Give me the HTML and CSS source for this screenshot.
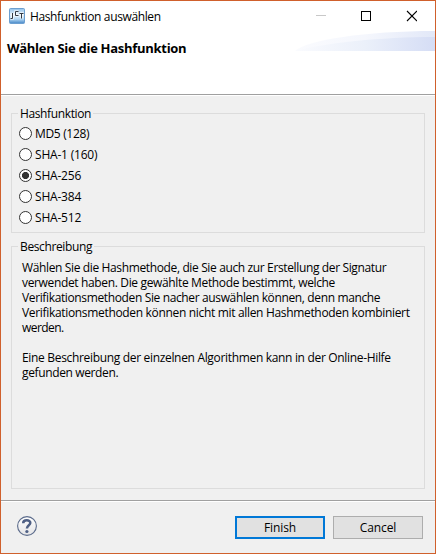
FILE: index.html
```
<!DOCTYPE html>
<html lang="de">
<head>
<meta charset="utf-8">
<title>Hashfunktion auswählen</title>
<link rel="stylesheet" href="styles.css">
</head>
<body>
<div class="window">
  <div class="titlebar">
    <svg class="app-icon" width="16" height="16" viewBox="0 0 16 16">
      <defs><linearGradient id="app" x1="0" y1="0" x2="0" y2="1"><stop offset="0" stop-color="#8fc0ea"/><stop offset=".4" stop-color="#e4f1fb"/><stop offset=".7" stop-color="#b4d8f4"/><stop offset="1" stop-color="#4385c6"/></linearGradient></defs>
      <rect x=".5" y=".5" width="15" height="15" rx="1" fill="url(#app)" stroke="#6c9fd0"/>
      <path d="M3.500 5v5.500h-2M9.500 3.500h-3v4h3M10.500 5.500h4M12.500 5.500v5" fill="none" stroke="#fff" stroke-opacity=".7" stroke-width="2.600"/>
      <path d="M3.500 5v5.500h-2M9.500 3.500h-3v4h3M10.500 5.500h4M12.500 5.500v5" fill="none" stroke="#333a44"/>
    </svg>
    <span class="title">Hashfunktion auswählen</span>
    <svg class="controls" width="103" height="12" viewBox="0 0 103 12">
      <path d="M2 5.500h10" stroke="#c8c8c8"/>
      <rect x="47.500" y="1.500" width="9" height="9" fill="none" stroke="#000"/>
      <path d="M93 1l10 10M103 1l-10 10" stroke="#000" stroke-width="1.100"/>
    </svg>
  </div>
  <header class="banner">
    <h1>Wählen Sie die Hashfunktion</h1>
    <svg class="swoosh" width="140" height="20" viewBox="0 0 140 20">
      <defs><linearGradient id="sw"><stop offset="0" stop-color="#fafbfe"/><stop offset=".5" stop-color="#ebf0fa"/><stop offset="1" stop-color="#d5ddf5"/></linearGradient>
      <linearGradient id="sw2"><stop offset="0" stop-color="#fafbfe"/><stop offset=".5" stop-color="#f5f7fd"/><stop offset="1" stop-color="#e2e8f8"/></linearGradient></defs>
      <path d="M0 20C12 9 70 0 140 0V20Z" fill="url(#sw2)"/>
      <path d="M0 20C30 12 85 6 140 6V20Z" fill="url(#sw)"/>
    </svg>
  </header>
  <main>
    <section class="group hash">
      <h2>Hashfunktion</h2>
      <div class="option md5"><i class="radio"></i><span>MD5 (128)</span></div>
      <div class="option"><i class="radio"></i><span>SHA-1 (160)</span></div>
      <div class="option"><i class="radio checked"></i><span>SHA-256</span></div>
      <div class="option"><i class="radio"></i><span>SHA-384</span></div>
      <div class="option"><i class="radio"></i><span>SHA-512</span></div>
    </section>
    <section class="group description">
      <h2>Beschreibung</h2>
      <p>
        <span class="line tight">Wählen Sie die Hashmethode, die Sie auch zur Erstellung der Signatur</span>
        <span class="line">verwendet haben. Die gewählte Methode bestimmt, welche</span>
        <span class="line tight">Verifikationsmethoden Sie nacher auswählen können, denn manche</span>
        <span class="line loose">Verifikationsmethoden können nicht mit allen Hashmethoden kombiniert</span>
        <span class="line short">werden.</span>
      </p>
      <p>
        <span class="line loose">Eine Beschreibung der einzelnen Algorithmen kann in der Online-Hilfe</span>
        <span class="line tight">gefunden werden.</span>
      </p>
    </section>
  </main>
  <footer>
    <svg class="help" width="20" height="20" viewBox="0 0 20 20">
      <defs><linearGradient id="hg" x2="0" y2="1"><stop offset="0" stop-color="#fff"/><stop offset="1" stop-color="#e4e4e6"/></linearGradient></defs>
      <circle cx="10" cy="10" r="9.400" fill="url(#hg)" stroke="#5b6b8b" stroke-width="1.100"/>
      <path d="M6.200 7.200C6.200 3.200 13.500 3.400 13.300 7C13.200 9.300 9.900 9.200 9.900 12.600" fill="none" stroke="#4f6085" stroke-width="2.500"/>
      <circle cx="9.900" cy="15.500" r="1.600" fill="#4f6085"/>
    </svg>
    <button class="primary">Finish</button>
    <button>Cancel</button>
  </footer>
</div>
</body>
</html>
```
FILE: styles.css
```
* { box-sizing: border-box; }
body { margin: 0; font: 12px/15px "Open Sans", "Noto Sans", sans-serif; color: #000; }
.window { width: 436px; height: 554px; border: 1px solid #d0602c; background: #f0f0f0; display: flex; flex-direction: column; }
.titlebar { height: 30px; background: #fff; display: flex; align-items: center; padding: 0 18px 0 8px; }
.title { margin-left: 5px; flex: 1; letter-spacing: -.37px; white-space: nowrap; }
.controls { flex: none; }
.banner { height: 65px; background: #fff; border-bottom: 1px solid #fff; box-shadow: inset 0 -1px #a0a0a0; display: flex; justify-content: space-between; }
h1 { margin: 9px 0 0 6px; font-size: 13px; line-height: 16px; font-weight: 700; letter-spacing: -.29px; white-space: nowrap; }
main { flex: 1; padding: 17px 10px 11px; display: flex; flex-direction: column; gap: 13px; }
.group { border: 1px solid #dcdcdc; padding: 0 7px; }
.hash { height: 120px; }
.description { height: 243px; }
h2 { width: fit-content; margin: -8px 0 0 -1px; padding: 0 2px; background: #f0f0f0; font-size: 12px; line-height: 16px; font-weight: 400; letter-spacing: -.37px; }
.option { height: 21px; display: flex; align-items: center; gap: 3px; letter-spacing: -.2px; }
.md5 { margin-top: 1px; letter-spacing: -.33px; }
.radio { width: 13px; height: 13px; border: 1px solid #333; border-radius: 50%; background: #fff; }
.checked { background: radial-gradient(circle, #333 3.200px, #fff 3.900px); }
p { margin: 5px 0 0 3px; white-space: nowrap; }
p + p { margin-top: 15px; }
.line { display: block; height: 15px; letter-spacing: -.35px; }
.tight { letter-spacing: -.366px; }
.loose { letter-spacing: -.325px; }
.short { letter-spacing: -.55px; }
footer { height: 53px; border-top: 1px solid #a0a0a0; box-shadow: inset 0 1px #fff; display: flex; align-items: flex-start; padding: 15px 12px 0 16px; }
.help { margin-right: auto; }
button { width: 90px; height: 23px; margin: 0 0 0 8px; padding: 0; border: 1px solid #adadad; border-radius: 0; background: #e1e1e1; color: #000; font: inherit; letter-spacing: -.1px; }
.primary { border: 2px solid #0078d7; }
```
